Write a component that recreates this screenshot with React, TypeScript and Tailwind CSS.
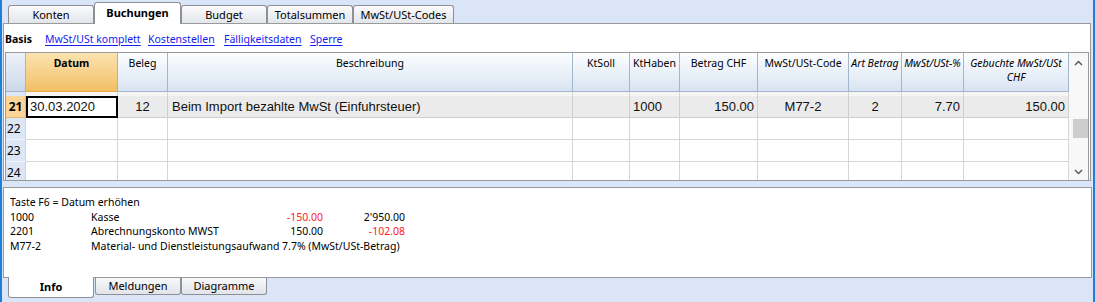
import clsx from 'clsx'

type Col = { label: string; w: string; align: string; italic?: boolean }

const cols: Col[] = [
  { label: 'Datum', w: 'w-[92px]', align: 'justify-start pl-[4px]' },
  { label: 'Beleg', w: 'w-[50px]', align: 'justify-center' },
  { label: 'Beschreibung', w: 'w-[405px]', align: 'justify-start pl-[4px]' },
  { label: 'KtSoll', w: 'w-[57px]', align: 'justify-start pl-[3px]' },
  { label: 'KtHaben', w: 'w-[50px]', align: 'justify-start pl-[3px]' },
  { label: 'Betrag CHF', w: 'w-[78px]', align: 'justify-end pr-[3px]' },
  { label: 'MwSt/USt-Code', w: 'w-[91px]', align: 'justify-center' },
  { label: 'Art Betrag', w: 'w-[53px]', align: 'justify-center', italic: true },
  { label: 'MwSt/USt-%', w: 'w-[62px]', align: 'justify-end pr-[3px]', italic: true },
  { label: 'Gebuchte MwSt/USt CHF', w: 'w-[105px]', align: 'justify-end pr-[3px]', italic: true },
]

const row21 = ['30.03.2020', '12', 'Beim Import bezahlte MwSt (Einfuhrsteuer)', '', '1000', '150.00', 'M77-2', '2', '7.70', '150.00']

const ui = "font-['Noto_Sans',sans-serif] text-[10.5px] text-black"
const data = "font-['Liberation_Sans',Arial,sans-serif] text-[13px] text-[#111]"

function TopTabs() {
  const tabs = [
    { label: 'Konten', w: 'w-[86px]' },
    { label: 'Buchungen', w: 'w-[87px]', active: true },
    { label: 'Budget', w: 'w-[86px]' },
    { label: 'Totalsummen', w: 'w-[86px]' },
    { label: 'MwSt/USt-Codes', w: 'w-[101px]' },
  ]
  return (
    <div className="flex h-[23px] items-end pl-[6px]">
      {tabs.map((t) =>
        t.active ? (
          <div
            key={t.label}
            className={clsx(
              t.w,
              'relative z-10 -mb-px flex h-[22px] items-center justify-center rounded-t-[3px] border border-b-0 border-[#8d9097] bg-white text-[11px] font-bold',
            )}
          >
            {t.label}
          </div>
        ) : (
          <div
            key={t.label}
            className={clsx(
              t.w,
              'flex h-[18px] items-center justify-center rounded-t-[3px] border border-b-0 border-[#8d9097] bg-linear-to-b from-[#fbfbfc] to-[#e2e5ea] pt-px text-[11px]',
            )}
          >
            {t.label}
          </div>
        ),
      )}
    </div>
  )
}

function LinkBar() {
  const links = [
    { label: 'MwSt/USt komplett', w: 'w-[103px]' },
    { label: 'Kostenstellen', w: 'w-[76px]' },
    { label: 'Fälligkeitsdaten', w: 'w-[86px]' },
    { label: 'Sperre', w: 'w-[50px]' },
  ]
  return (
    <div className="flex h-[28px] pl-[1px] pt-[8px] leading-[14px]">
      <div className="w-[40px] font-bold">Basis</div>
      {links.map((l) => (
        <div key={l.label} className={l.w}>
          <span className="text-[#1420f0] underline underline-offset-[2px]">{l.label}</span>
        </div>
      ))}
    </div>
  )
}

function Chevron({ up }: { up?: boolean }) {
  return (
    <svg width="9" height="6" viewBox="0 0 9 6" className="ml-[5px]">
      <polyline
        points={up ? '1,5 4.5,1.5 8,5' : '1,1 4.5,4.5 8,1'}
        fill="none"
        stroke="#5c5c5c"
        strokeWidth="1.5"
      />
    </svg>
  )
}

function Grid() {
  return (
    <div className="ml-[1px] flex h-[128px] w-[1084px] overflow-hidden border-x border-t border-[#9a9a9a]">
      <div className="flex w-[1063px] shrink-0 flex-col">
        {/* header */}
        <div className="flex h-[39px] shrink-0">
          <div className="w-[20px] shrink-0 border-r border-b border-[#a3b6cf] bg-linear-to-b from-[#eef2f8] to-[#cbd8ea]" />
          {cols.map((c) => (
            <div
              key={c.label}
              className={clsx(
                c.w,
                'shrink-0 border-r border-b pt-[3px] text-center leading-[14px]',
                c.label === 'Datum'
                  ? 'border-[#eaa64a] bg-linear-to-b from-[#fbe3b0] to-[#f2bf63] font-bold'
                  : 'border-[#a3b6cf] bg-linear-to-b from-[#fdfeff] to-[#d9e4f2]',
                c.italic && 'italic',
              )}
            >
              {c.label === 'Gebuchte MwSt/USt CHF' ? (
                <>
                  Gebuchte MwSt/USt
                  <br />
                  CHF
                </>
              ) : (
                <span className="whitespace-nowrap">{c.label}</span>
              )}
            </div>
          ))}
        </div>
        {/* frozen strip */}
        <div className="flex h-[4px] shrink-0">
          <div className="w-[20px] shrink-0 border-r border-[#c6d3e4] bg-[#dde7f5]" />
          {cols.map((c) => (
            <div key={c.label} className={clsx(c.w, 'shrink-0 border-r border-[#d6d6d6] bg-[#f6f6f6]')} />
          ))}
        </div>
        {/* row 21 */}
        <div className="flex h-[22px] shrink-0">
          <div className="flex w-[20px] shrink-0 items-center justify-center border-r border-b border-[#e3b56e] bg-[#fbd597] pt-px text-[12px] font-bold">
            21
          </div>
          {cols.map((c, i) =>
            i === 0 ? (
              <div key={c.label} className="flex h-[22px] w-[92px] shrink-0 items-center border-2 border-black bg-white pl-[2px]">
                <span className={data}>{row21[i]}</span>
              </div>
            ) : (
              <div
                key={c.label}
                className={clsx(c.w, c.align, 'flex shrink-0 items-center border-r border-b border-[#d0d0d0] bg-[#ebebeb]')}
              >
                <span className={clsx(data, 'whitespace-nowrap')}>{row21[i]}</span>
              </div>
            ),
          )}
        </div>
        {[22, 23, 24].map((n) => (
          <div key={n} className="flex h-[22px] shrink-0">
            <div className="flex w-[20px] shrink-0 items-center border-r border-b border-r-[#c6d3e4] border-b-[#f4f7fb] bg-[#dce6f4] pl-[1px] pt-px text-[12px]">
              {n}
            </div>
            {cols.map((c) => (
              <div key={c.label} className={clsx(c.w, 'shrink-0 border-r border-b border-[#d6d6d6] bg-white')} />
            ))}
          </div>
        ))}
      </div>
      {/* scrollbar */}
      <div className="flex w-[19px] shrink-0 flex-col bg-[#f8f8f8]">
        <div className="mt-[7px]">
          <Chevron up />
        </div>
        <div className="mt-[53px] ml-[4px] h-[19px] w-[15px] bg-[#cdcdcd]" />
        <div className="mt-[31px]">
          <Chevron />
        </div>
      </div>
    </div>
  )
}

function InfoPanel() {
  return (
    <div className="mt-[6px] ml-[1px] h-[91px] w-[1089px] border border-[#9a9a9a] bg-white pl-[6px] pt-[7px] leading-[14.6px]">
      <div>Taste F6 = Datum erhöhen</div>
      <div className="grid grid-cols-[81px_150px_82px_82px]">
        <div>1000</div>
        <div>Kasse</div>
        <div className="text-right text-[#ff1a24]">-150.00</div>
        <div className="text-right">2&apos;950.00</div>
        <div>2201</div>
        <div>Abrechnungskonto MWST</div>
        <div className="text-right">150.00</div>
        <div className="text-right text-[#ff1a24]">-102.08</div>
        <div>M77-2</div>
        <div className="col-span-3 whitespace-nowrap">Material- und Dienstleistungsaufwand 7.7% (MwSt/USt-Betrag)</div>
      </div>
    </div>
  )
}

function BottomTabs() {
  return (
    <div className="flex items-start gap-[1px] pl-[6px]">
      <div className="relative z-10 -mt-px flex h-[21px] w-[86px] items-center justify-center rounded-b-[3px] border border-t-0 border-[#8d9097] bg-white pt-px text-[11px] font-bold">
        Info
      </div>
      <div className="flex h-[17px] w-[86px] items-center justify-center rounded-b-[3px] border border-t-0 border-[#8d9097] bg-linear-to-b from-[#f7f8fa] to-[#e1e4ea] text-[11px]">
        Meldungen
      </div>
      <div className="-ml-px flex h-[17px] w-[86px] items-center justify-center rounded-b-[3px] border border-t-0 border-[#8d9097] bg-linear-to-b from-[#f7f8fa] to-[#e1e4ea] text-[11px]">
        Diagramme
      </div>
    </div>
  )
}

export default function App() {
  return (
    <div className={clsx(ui, 'h-[302px] w-[1095px] overflow-hidden border-x-2 border-[#1d7fd8] bg-[#dbe5f8]')}>
      <TopTabs />
      <div className="ml-[1px] h-[158px] w-[1088px] border border-[#9a9a9a] bg-white">
        <LinkBar />
        <Grid />
      </div>
      <InfoPanel />
      <BottomTabs />
    </div>
  )
}
